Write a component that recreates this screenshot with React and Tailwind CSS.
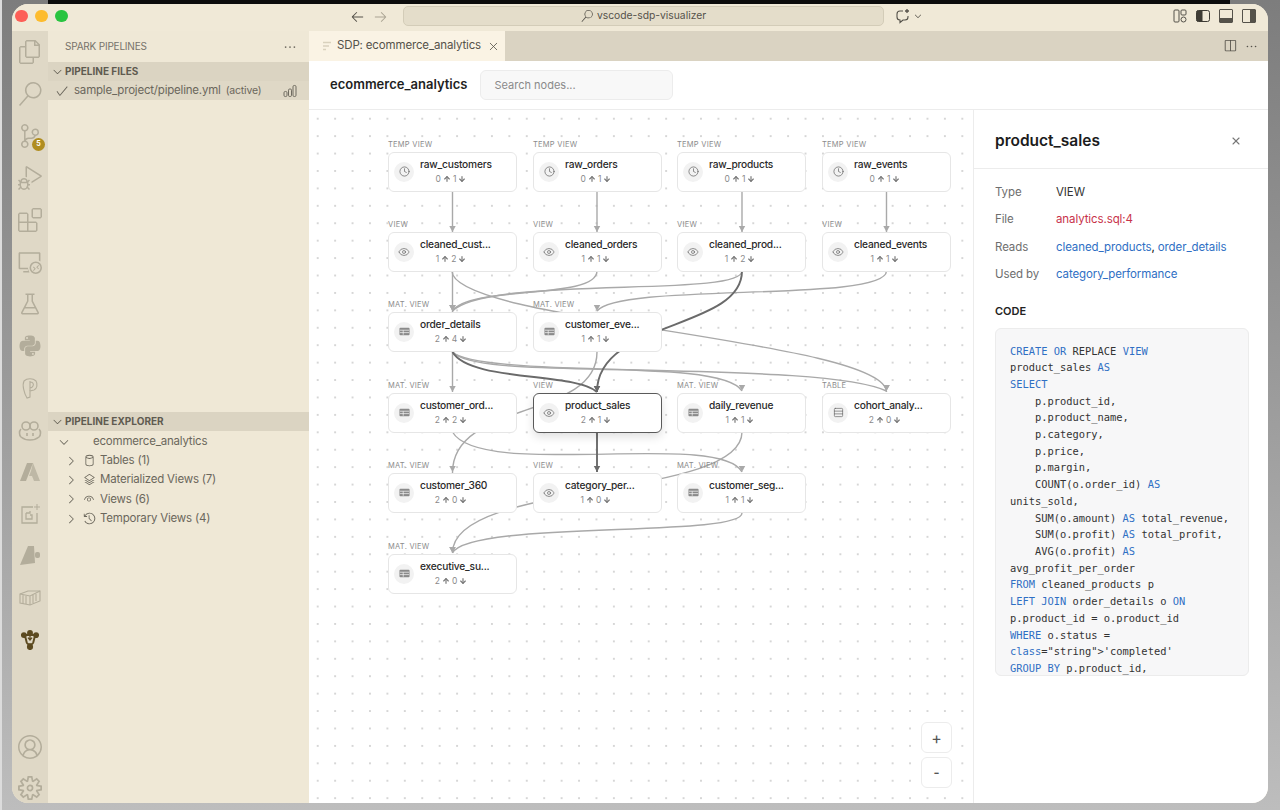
import React from "react";
import {
  VscFiles, VscSearch, VscSourceControl, VscDebugAlt, VscExtensions, VscRemoteExplorer, VscBeaker,
  VscAccount, VscSettingsGear, VscChevronDown, VscChevronRight, VscCheck, VscEllipsis,
  VscArrowLeft, VscArrowRight, VscDatabase, VscLayers, VscEye, VscHistory, VscSplitHorizontal,
  VscLayoutPanel, VscLayoutSidebarRight,
} from "react-icons/vsc";
import { FaPython } from "react-icons/fa";
import { Clock, Eye, Rows3, ArrowUp, ArrowDown, X } from "lucide-react";

const I = "text-[#b3ad9b]";

function PIcon() {
  return (
    <svg width="24" height="24" viewBox="0 0 24 24" fill="none" stroke="currentColor" strokeWidth="1.1">
      <path d="M6 5c3-3 9-3 12 0 2 3 1 8-2 9l-4 1v6l-3 1c-3-5-5-13-3-17z" />
      <path d="M12 5v10M12 6c3 0 4 2 3 4s-2 2-3 2" />
    </svg>
  );
}
function CopilotIcon() {
  return (
    <svg width="26" height="24" viewBox="0 0 26 24" fill="none" stroke="currentColor" strokeWidth="1.6">
      <circle cx="9" cy="8" r="4" />
      <circle cx="17" cy="8" r="4" />
      <path d="M4 11c-2 2-2 6 0 8 5 4 13 4 18 0 2-2 2-6 0-8" />
      <path d="M10 15v3M16 15v3" />
    </svg>
  );
}
function AzureIcon() {
  return (
    <svg width="24" height="24" viewBox="0 0 24 24" fill="currentColor">
      <path d="M9 3h6L8 21H2z" />
      <path d="M15 3l7 18h-6l-2-5-3 0 2-5z" opacity="0.75" />
    </svg>
  );
}
function BoxSpark() {
  return (
    <svg width="24" height="24" viewBox="0 0 24 24" fill="none" stroke="currentColor" strokeWidth="1.3">
      <path d="M15 5H4v16h15V11" />
      <path d="M8 11h4v-2M8 11v6h6v-4h-2" />
      <path d="M19 2v6M16 5h6" strokeWidth="1" />
    </svg>
  );
}
function TerraIcon() {
  return (
    <svg width="24" height="24" viewBox="0 0 24 24" fill="currentColor">
      <path d="M10 2h6l1 17-15 2z" />
      <rect x="17" y="8" width="5" height="6" rx="2" />
    </svg>
  );
}
function CrateIcon() {
  return (
    <svg width="24" height="24" viewBox="0 0 24 24" fill="none" stroke="currentColor" strokeWidth="1.1">
      <path d="M2 8l8-3h12v10l-10 4-10-2z" />
      <path d="M2 8l10 2 10-5M12 10v9M5 9v9M8 10v8M15 9v8M18 8v7" />
    </svg>
  );
}
function SparkIcon() {
  return (
    <svg width="18" height="20" viewBox="0 0 22 24" fill="none" stroke="#5c4a20" strokeWidth="2.4">
      <circle cx="11" cy="3.5" r="2.4" fill="#5c4a20" />
      <circle cx="3.5" cy="6" r="2.4" fill="#5c4a20" />
      <circle cx="18.5" cy="6" r="2.4" fill="#5c4a20" />
      <path d="M5 7l2 8c1 3 7 3 8 0l2-8M6 6h10" />
      <path d="M11 6v6M8.5 9l2.5 3 2.5-3" strokeWidth="1.6" />
      <circle cx="11" cy="20.5" r="2.6" fill="#5c4a20" />
    </svg>
  );
}
function LayoutIcon() {
  return (
    <svg width="16" height="16" viewBox="0 0 16 16" fill="none" stroke="#55524a" strokeWidth="1">
      <rect x="2" y="2" width="5" height="12" rx="1" />
      <rect x="9" y="2" width="5" height="5" rx="1" />
      <circle cx="11.5" cy="11.5" r="2.5" />
    </svg>
  );
}
function SideFilled() {
  return (
    <svg width="16" height="16" viewBox="0 0 16 16" fill="none" stroke="#3f3c35" strokeWidth="1">
      <rect x="1.5" y="2.5" width="13" height="11" rx="2" />
      <path d="M2 3h5v10H2z" fill="#3f3c35" />
    </svg>
  );
}
function ChatSpark() {
  return (
    <svg width="16" height="16" viewBox="0 0 16 16" fill="none" stroke="#55524a" strokeWidth="1.1">
      <path d="M8 3H5C3 3 2 4 2 6v3c0 2 1 3 3 3v2.5l3-2.5h2c2 0 3-1 3-3V8" />
      <path d="M12 1v4M10 3h4" strokeWidth="1.3" />
    </svg>
  );
}
function TabGlyph() {
  return (
    <svg width="10" height="10" viewBox="0 0 10 10" stroke="#d9d1bd" strokeWidth="1.4">
      <path d="M1 1.5h8M1 5h6M1 8.5h3" />
    </svg>
  );
}
function MatIcon() {
  return (
    <svg width="11" height="11" viewBox="0 0 12 12">
      <rect x="0.5" y="2" width="11" height="8" rx="1" fill="#8a8a8a" />
      <path d="M1 4.6h10M1 7.2h10M4.6 4.6v5" stroke="#f3f3f3" strokeWidth="0.8" />
    </svg>
  );
}
function Bars() {
  return (
    <svg width="14" height="14" viewBox="0 0 14 14" fill="none" stroke="#6f6b60" strokeWidth="1">
      <rect x="1" y="7.5" width="3" height="5" rx="1.2" />
      <rect x="5.5" y="5" width="3" height="7.5" rx="1.2" />
      <rect x="10" y="1.5" width="3" height="11" rx="1.2" />
    </svg>
  );
}

const topIcons = [
  <VscFiles size={24} />, <VscSearch size={24} />, <VscSourceControl size={24} />, <VscDebugAlt size={24} />,
  <VscExtensions size={24} />, <VscRemoteExplorer size={24} />, <VscBeaker size={24} />, <FaPython size={24} />,
  <PIcon />, <CopilotIcon />, <AzureIcon />, <BoxSpark />, <TerraIcon />, <CrateIcon />, <SparkIcon />,
];

function ActivityBar() {
  return (
    <div className="flex w-[36px] shrink-0 flex-col items-center bg-[#dfd8c6] pb-[3px]">
      {topIcons.map((ic, i) => (
        <div key={i} className={`relative flex h-[42px] w-full items-center justify-center ${I}`}>
          {ic}
          {i === 2 && (
            <span className="absolute left-[20px] top-[23px] flex h-[13px] w-[13px] items-center justify-center rounded-full bg-[#b08d20] text-[7px] font-bold text-white">
              5
            </span>
          )}
        </div>
      ))}
      <div className={`mt-auto flex flex-col items-center gap-[17px] ${I}`}>
        <VscAccount size={24} />
        <VscSettingsGear size={24} />
      </div>
    </div>
  );
}

function SectionHeader({ children }) {
  return (
    <div className="flex h-[19px] items-center bg-[#dbd4c2] pl-[3px] text-[10px] font-bold text-[#5f5b50]">
      <VscChevronDown size={13} className="mr-[1px] text-[#5f5b50]" />
      {children}
    </div>
  );
}

function TreeRow({ icon, children }) {
  return (
    <div className="flex h-[19.3px] items-center pl-[16px] text-[11.5px] tracking-[-0.2px] text-[#6b675c]">
      <VscChevronRight size={14} className="mr-[3px]" />
      <span className="flex w-[16px] justify-center">{icon}</span>
      <span className="ml-[3px]">{children}</span>
    </div>
  );
}

function Sidebar() {
  return (
    <div className="flex w-[261px] shrink-0 flex-col bg-[#efe8d6]">
      <div className="flex h-[31px] items-center justify-between pl-[17px] pr-[12px] text-[10px] tracking-[-0.2px] text-[#77736a]">
        SPARK PIPELINES
        <VscEllipsis size={14} className="text-[#6f6b60]" />
      </div>
      <SectionHeader>PIPELINE FILES</SectionHeader>
      <div className="flex h-[19px] items-center bg-[#dfd8c6] pl-[7px] pr-[12px] text-[11.5px] tracking-[-0.2px] text-[#6b675c]">
        <VscCheck size={14} className="mr-[5px]" />
        <span>sample_project/pipeline.yml</span>
        <span className="ml-[5px] text-[10.5px]">(active)</span>
        <span className="ml-auto"><Bars /></span>
      </div>
      <div className="h-[312px]" />
      <SectionHeader>PIPELINE EXPLORER</SectionHeader>
      <div className="flex h-[20px] items-center pl-[9px] pt-[1px] text-[11.5px] tracking-[-0.2px] text-[#6b675c]">
        <VscChevronDown size={14} />
        <span className="ml-[22px]">ecommerce_analytics</span>
      </div>
      <TreeRow icon={<VscDatabase size={13} />}>Tables (1)</TreeRow>
      <TreeRow icon={<VscLayers size={13} />}>Materialized Views (7)</TreeRow>
      <TreeRow icon={<VscEye size={12} />}>Views (6)</TreeRow>
      <TreeRow icon={<VscHistory size={13} />}>Temporary Views (4)</TreeRow>
    </div>
  );
}

const nodes = [
  ["TEMP VIEW", "raw_customers", 0, 1, 388, 152, "c"],
  ["TEMP VIEW", "raw_orders", 0, 1, 533, 152, "c"],
  ["TEMP VIEW", "raw_products", 0, 1, 677, 152, "c"],
  ["TEMP VIEW", "raw_events", 0, 1, 822, 152, "c"],
  ["VIEW", "cleaned_cust...", 1, 2, 388, 232, "e"],
  ["VIEW", "cleaned_orders", 1, 1, 533, 232, "e"],
  ["VIEW", "cleaned_prod...", 1, 2, 677, 232, "e"],
  ["VIEW", "cleaned_events", 1, 1, 822, 232, "e"],
  ["MAT. VIEW", "order_details", 2, 4, 388, 312, "m"],
  ["MAT. VIEW", "customer_eve...", 1, 1, 533, 312, "m"],
  ["MAT. VIEW", "customer_ord...", 2, 2, 388, 393, "m"],
  ["VIEW", "product_sales", 2, 1, 533, 393, "e", true],
  ["MAT. VIEW", "daily_revenue", 1, 1, 677, 393, "m"],
  ["TABLE", "cohort_analy...", 2, 0, 822, 393, "t"],
  ["MAT. VIEW", "customer_360", 2, 0, 388, 473, "m"],
  ["VIEW", "category_per...", 1, 0, 533, 473, "e"],
  ["MAT. VIEW", "customer_seg...", 1, 1, 677, 473, "m"],
  ["MAT. VIEW", "executive_su...", 2, 0, 388, 554, "m"],
];

const edges = [
  ["M452.5 191V232", 452.5, 232],
  ["M597 191V232", 597, 232],
  ["M742 191V232", 742, 232],
  ["M886.5 191V232", 886.5, 232],
  ["M452.5 271V312", 452.5, 311],
  ["M452 271C452 322 886 340 886.5 392", 886.5, 391],
  ["M597 271C597 300 470 285 452.5 311", 452.5, 311],
  ["M742 271C742 298 490 275 452.5 311", 452.5, 311],
  ["M886.5 271C886 303 620 282 597 311", 597, 311],
  ["M597 352C597 420 452 400 452.5 473", 452.5, 472],
  ["M452.5 352V392", 452.5, 392],
  ["M452.5 352C480 382 720 355 742 391", 742, 391],
  ["M452.5 352C480 380 820 360 886.5 391", 886.5, 391],
  ["M452.5 432C480 480 720 430 742 472", 742, 472],
  ["M742 432C742 500 452 480 452.5 553", 452.5, 553],
  ["M742 513C742 538 470 520 452.5 553", 452.5, 553],
];
const darkEdges = [
  ["M742 271C742 330 597 320 597 392", 597, 392],
  ["M452.5 352C470 382 575 372 597 392", 597, 392],
  ["M597 432V472", 597, 472],
];

function Edges() {
  const one = (list, color, w) =>
    list.map(([d, x, y], i) => (
      <g key={i}>
        <path d={d} fill="none" stroke={color} strokeWidth={w} />
        <polygon points={`${x - 3.2},${y - 6} ${x + 3.2},${y - 6} ${x},${y}`} fill={color} />
      </g>
    ));
  return (
    <svg className="absolute left-0 top-0 h-full w-full" viewBox="0 0 664 693" preserveAspectRatio="xMinYMin">
      <g transform="translate(-309 -110)">
        {one(edges, "#a9a9a9", 1.4)}
        {one(darkEdges, "#6a6a6a", 1.9)}
      </g>
    </svg>
  );
}

function NodeIcon({ kind }) {
  if (kind === "c") return <Clock size={11} strokeWidth={1.6} />;
  if (kind === "e") return <Eye size={12} strokeWidth={1.4} />;
  if (kind === "t") return <Rows3 size={11} strokeWidth={1.5} />;
  return <MatIcon />;
}

function Node({ n }) {
  const [label, name, up, down, x, y, kind, sel] = n;
  return (
    <div className="absolute w-[129px]" style={{ left: x - 309, top: y - 110 - 13 }}>
      <div className="h-[13px] text-[7.5px] uppercase leading-[12px] tracking-[0.25px] text-[#8c8c8c]">{label}</div>
      <div
        className={`flex h-[39.5px] items-center rounded-[6px] bg-white pl-[5px] ${
          sel ? "border-[1.5px] border-[#5a5a5a] shadow-[0_4px_10px_rgba(0,0,0,0.12)]" : "border-[1.5px] border-[#e6e6e6]"
        }`}
      >
        <span className="flex h-[20px] w-[20px] shrink-0 items-center justify-center rounded-full bg-[#f2f2f2] text-[#666]">
          <NodeIcon kind={kind} />
        </span>
        <div className="ml-[6px] flex min-w-0 flex-col">
          <span className="-translate-y-[1px] whitespace-nowrap text-[10.2px] font-medium leading-[14px] tracking-[-0.2px] text-[#2a2a2a]">{name}</span>
          <span className="mt-[1px] flex w-[62px] items-center justify-center gap-[1px] text-[8.5px] leading-[12px] text-[#8a8a8a]">
            {up}
            <ArrowUp size={8} strokeWidth={3.5} className="mx-[1px] text-[#777]" />
            {down}
            <ArrowDown size={8} strokeWidth={3.5} className="ml-[1px] text-[#777]" />
          </span>
        </div>
      </div>
    </div>
  );
}

function Canvas() {
  return (
    <div className="relative min-w-0 flex-1 overflow-hidden bg-white bg-[radial-gradient(circle,#d6d6d6_0.9px,transparent_1.1px)] bg-[size:17.43px_17.43px]">
      <Edges />
      {nodes.map((n) => (
        <Node key={n[1]} n={n} />
      ))}
      <div className="absolute left-[612px] top-[612px] flex flex-col gap-[4px]">
        <button className="flex h-[31px] w-[31px] items-center justify-center rounded-[6px] border-[1.5px] border-[#ececec] bg-white text-[16px] text-[#555]">+</button>
        <button className="flex h-[31px] w-[31px] items-center justify-center rounded-[6px] border-[1.5px] border-[#ececec] bg-white text-[13px] font-semibold text-[#555]">-</button>
      </div>
    </div>
  );
}

const K = ({ children }) => <span className="text-[#2f6fc4]">{children}</span>;

const code = [
  <><K>CREATE OR</K> REPLACE <K>VIEW</K></>,
  <>product_sales <K>AS</K></>,
  <K>SELECT</K>,
  <>    p.product_id,</>,
  <>    p.product_name,</>,
  <>    p.category,</>,
  <>    p.price,</>,
  <>    p.margin,</>,
  <>    COUNT(o.order_id) <K>AS</K></>,
  <>units_sold,</>,
  <>    SUM(o.amount) <K>AS</K> total_revenue,</>,
  <>    SUM(o.profit) <K>AS</K> total_profit,</>,
  <>    AVG(o.profit) <K>AS</K></>,
  <>avg_profit_per_order</>,
  <><K>FROM</K> cleaned_products p</>,
  <><K>LEFT JOIN</K> order_details o <K>ON</K></>,
  <>p.product_id = o.product_id</>,
  <><K>WHERE</K> o.status =</>,
  <><K>class</K>="string"&gt;'completed'</>,
  <><K>GROUP BY</K> p.product_id,</>,
];

function InfoRow({ label, children }) {
  return (
    <div className="flex h-[27.4px] items-center text-[11.5px] tracking-[-0.1px]">
      <span className="w-[61px] text-[#6e6e6e]">{label}</span>
      <span>{children}</span>
    </div>
  );
}

function Details() {
  return (
    <div className="flex w-[295px] shrink-0 flex-col border-l border-[#ececec] bg-white">
      <div className="flex h-[59px] items-center justify-between border-b border-[#ececec] pl-[21px] pr-[26px] pt-[3px]">
        <span className="text-[15.5px] font-semibold text-[#1c1c1c]">product_sales</span>
        <X size={12} strokeWidth={2.2} className="text-[#777]" />
      </div>
      <div className="flex flex-col pl-[21px] pr-[19px] pt-[10px]">
        <InfoRow label="Type"><span className="text-[#333]">VIEW</span></InfoRow>
        <InfoRow label="File"><span className="text-[#c8324a]">analytics.sql:4</span></InfoRow>
        <InfoRow label="Reads">
          <span className="text-[#2f6fc4]">cleaned_products</span>, <span className="text-[#2f6fc4]">order_details</span>
        </InfoRow>
        <InfoRow label="Used by"><span className="text-[#2f6fc4]">category_performance</span></InfoRow>
        <div className="mt-[15px] text-[11px] font-semibold leading-[14px] text-[#222]">CODE</div>
        <div className="mt-[10px] h-[348px] overflow-hidden rounded-[6px] border border-[#ececec] bg-[#f7f7f8] px-[14px] pt-[14px] [font-family:'DejaVu_Sans_Mono',monospace] text-[10.4px] leading-[16.7px] text-[#333]">
          {code.map((c, i) => (
            <div key={i} className="whitespace-pre">{c}</div>
          ))}
        </div>
      </div>
    </div>
  );
}

function TitleBar() {
  return (
    <div className="flex h-[27px] shrink-0 items-center bg-[#f0e9d7] pb-[3px]">
      <div className="ml-[3px] flex w-[388px] shrink-0 items-center">
        <span className="ml-[0px] h-[12.5px] w-[12.5px] rounded-full bg-[#fd5f57]" />
        <span className="ml-[7.5px] h-[12.5px] w-[12.5px] rounded-full bg-[#fdbc2e]" />
        <span className="ml-[7.5px] h-[12.5px] w-[12.5px] rounded-full bg-[#29c440]" />
        <VscArrowLeft size={15} className="ml-[282px] shrink-0 text-[#55524a]" />
        <VscArrowRight size={15} className="ml-[8px] shrink-0 text-[#aaa493]" />
      </div>
      <div className="flex h-[20px] w-[481px] shrink-0 items-center justify-center gap-[4px] rounded-[5px] border border-[#d3ccb8] bg-[#e4ddca] text-[10.3px] text-[#55524a]">
        <VscSearch size={12} />
        vscode-sdp-visualizer
      </div>
      <span className="ml-[11px]"><ChatSpark /></span>
      <VscChevronDown size={10} className="ml-[2px] text-[#55524a]" />
      <div className="ml-auto mr-[11px] flex items-center gap-[7px]">
        <LayoutIcon />
        <SideFilled />
        <VscLayoutPanel size={16} className="text-[#55524a]" />
        <VscLayoutSidebarRight size={16} className="text-[#55524a]" />
      </div>
    </div>
  );
}

function Main() {
  return (
    <div className="flex min-w-0 flex-1 flex-col">
      <div className="flex h-[30px] shrink-0 items-stretch bg-[#dad3c2]">
        <div className="flex w-[196px] items-center bg-[#faf3e4] pl-[13px] text-[11.5px] tracking-[-0.15px] text-[#55524a]">
          <TabGlyph />
          <span className="ml-[5px] whitespace-nowrap">SDP: ecommerce_analytics</span>
          <X size={13} strokeWidth={1.5} className="ml-[6px] text-[#55524a]" />
        </div>
        <div className="ml-auto mr-[10px] flex items-center gap-[8px]">
          <VscSplitHorizontal size={14} className="text-[#55524a]" />
          <VscEllipsis size={13} className="text-[#55524a]" />
        </div>
      </div>
      <div className="flex h-[49px] shrink-0 items-center border-b border-[#ececec] bg-white pl-[21px]">
        <span className="text-[13px] font-semibold text-[#1f1f1f]">ecommerce_analytics</span>
        <div className="ml-[13px] flex h-[30px] w-[193px] items-center rounded-[6px] border border-[#ececec] bg-[#f8f8f8] pl-[13px] text-[11px] text-[#8a8a8a]">
          Search nodes...
        </div>
      </div>
      <div className="flex min-h-0 flex-1">
        <Canvas />
        <Details />
      </div>
    </div>
  );
}

export default function App() {
  return (
    <div className="relative h-[810px] w-[1280px] overflow-hidden border-l-2 border-[#dcdcdc] bg-gradient-to-b from-[#7d7d7d] to-[#bdbdbd] pl-[10px] pr-[12px] pb-[7px] pt-[4px] [font-family:Inter,sans-serif]">
      <div className="absolute left-[46px] top-0 h-[4px] w-[1182px] bg-[#0c0c0c]" />
      <div className="relative flex h-[799px] w-[1256px] flex-col overflow-hidden rounded-[16px] bg-[#f0e9d7]">
        <TitleBar />
        <div className="flex min-h-0 flex-1">
          <ActivityBar />
          <Sidebar />
          <Main />
        </div>
      </div>
    </div>
  );
}
